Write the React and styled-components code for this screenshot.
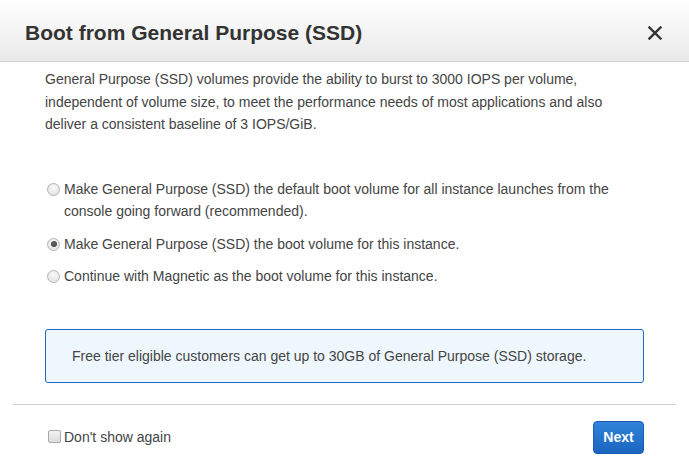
import React from "react";
import styled, { createGlobalStyle } from "styled-components";

const GlobalStyle = createGlobalStyle`
  html, body { margin: 0; padding: 0; background: #fff; }
  body { font-family: "Liberation Sans", Arial, sans-serif; }
  * { box-sizing: border-box; }
`;

const Modal = styled.div`
  width: 689px;
  height: 464px;
  display: flex;
  flex-direction: column;
  background: #fff;
  overflow: hidden;
`;

const Header = styled.div`
  height: 62px;
  flex: none;
  display: flex;
  align-items: center;
  justify-content: space-between;
  padding: 4px 27px 0 25px;
  background: linear-gradient(to bottom, #ffffff 0%, #e9e9e9 100%);
  border-bottom: 1px solid #cfcfcf;
`;

const Title = styled.h2`
  margin: 0;
  font-size: 21px;
  font-weight: bold;
  color: #333;
`;

const CloseButton = styled.button`
  border: 0;
  background: none;
  padding: 0;
  width: 14px;
  height: 14px;
  display: flex;
  cursor: pointer;
  color: #333;
`;

const Body = styled.div`
  padding: 0 45px;
  color: #444;
  font-size: 14px;
`;

const Intro = styled.p`
  margin: 6px 0 0;
  line-height: 22.5px;
`;

const OptionList = styled.div`
  margin-top: 42px;
  display: flex;
  flex-direction: column;
  gap: 10px;
`;

const Option = styled.label`
  display: flex;
  align-items: flex-start;
  line-height: 22.5px;
  cursor: pointer;
`;

const Radio = styled.input.attrs({ type: "radio" })`
  appearance: none;
  -webkit-appearance: none;
  flex: none;
  width: 13px;
  height: 13px;
  margin: 5px 4px 0 2px;
  border-radius: 50%;
  border: 1px solid #b4b4b4;
  background: radial-gradient(circle at 50% 35%, #fafafa 0%, #e6e6e6 70%, #dcdcdc 100%);
  position: relative;
  &:checked::after {
    content: "";
    position: absolute;
    left: 2.5px;
    top: 2.5px;
    width: 6px;
    height: 6px;
    border-radius: 50%;
    background: radial-gradient(circle at 50% 40%, #666 0%, #3a3a3a 100%);
  }
`;

const InfoBox = styled.div`
  margin-top: 41px;
  border: 1px solid #1d6cc4;
  border-radius: 3px;
  background: #eff7fe;
  padding: 15px 26px;
  line-height: 22px;
`;

const Footer = styled.div`
  margin: 21px 13px 0;
  border-top: 1px solid #cfcfcf;
  padding: 16px 32px 11px 35px;
  display: flex;
  align-items: center;
  justify-content: space-between;
`;

const CheckLabel = styled.label`
  display: flex;
  align-items: center;
  color: #444;
  font-size: 14px;
  cursor: pointer;
`;

const Checkbox = styled.input.attrs({ type: "checkbox" })`
  appearance: none;
  -webkit-appearance: none;
  width: 13px;
  height: 13px;
  margin: 0 3px 1px 0;
  border: 1px solid #a9a9a9;
  border-radius: 2px;
  background: linear-gradient(to bottom, #f2f2f2, #dcdcdc);
`;

const PrimaryButton = styled.button`
  width: 51px;
  height: 33px;
  padding: 0;
  border: 1px solid #1a5cb3;
  border-radius: 4px;
  background: linear-gradient(to bottom, #2f82d8 0%, #1b65c0 100%);
  color: #fff;
  font-family: "Liberation Sans", Arial, sans-serif;
  font-size: 14px;
  font-weight: bold;
  cursor: pointer;
`;

const options = [
  {
    id: "default",
    label:
      "Make General Purpose (SSD) the default boot volume for all instance launches from the console going forward (recommended).",
  },
  { id: "instance", label: "Make General Purpose (SSD) the boot volume for this instance." },
  { id: "magnetic", label: "Continue with Magnetic as the boot volume for this instance." },
];

export default function App() {
  const [choice, setChoice] = React.useState("instance");
  return (
    <>
      <GlobalStyle />
      <Modal>
        <Header>
          <Title>Boot from General Purpose (SSD)</Title>
          <CloseButton aria-label="Close">
            <svg width="14" height="14" viewBox="0 0 14 14">
              <path d="M1.5 1.5 L12.5 12.5 M12.5 1.5 L1.5 12.5" stroke="currentColor" strokeWidth="2.4" strokeLinecap="square" />
            </svg>
          </CloseButton>
        </Header>
        <Body>
          <Intro>
            General Purpose (SSD) volumes provide the ability to burst to 3000 IOPS per volume,
            independent of volume size, to meet the performance needs of most applications and also
            deliver a consistent baseline of 3 IOPS/GiB.
          </Intro>
          <OptionList>
            {options.map((o) => (
              <Option key={o.id}>
                <Radio name="boot" checked={choice === o.id} onChange={() => setChoice(o.id)} />
                <span>{o.label}</span>
              </Option>
            ))}
          </OptionList>
          <InfoBox>
            Free tier eligible customers can get up to 30GB of General Purpose (SSD) storage.
          </InfoBox>
        </Body>
        <Footer>
          <CheckLabel>
            <Checkbox />
            Don't show again
          </CheckLabel>
          <PrimaryButton>Next</PrimaryButton>
        </Footer>
      </Modal>
    </>
  );
}
